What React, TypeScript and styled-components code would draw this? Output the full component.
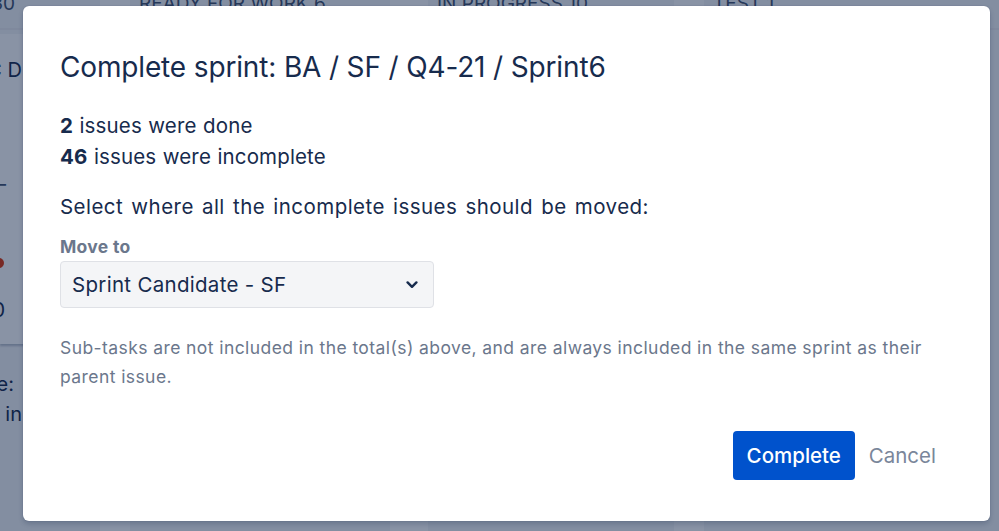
import React, { useState } from "react";
import styled, { createGlobalStyle } from "styled-components";

const GlobalStyle = createGlobalStyle`
  html, body {
    margin: 0;
    padding: 0;
    width: 100%;
    height: 100%;
    overflow: hidden;
    font-family: Inter, "Noto Sans", "Liberation Sans", sans-serif;
    background: #ffffff;
  }
  #root {
    height: 100%;
  }
`;

const columns = [
  { title: "BACKLOG 30", width: 100, gap: 0 },
  { title: "READY FOR WORK 6", width: 260, gap: 30 },
  { title: "IN PROGRESS 10", width: 246, gap: 38 },
  { title: "TEST 1", width: 300, gap: 30 },
];

function CompleteSprintDialog() {
  const [target, setTarget] = useState<string>("Sprint Candidate - SF");

  return (
    <Page>
      <Board>
        {columns.map((column, index) => (
          <Column key={column.title} $width={column.width} $gap={column.gap}>
            <ColumnHeader $first={index === 0}>{column.title}</ColumnHeader>
            {index === 0 && (
              <>
                <Card>
                  <CardKey>BASFC D</CardKey>
                  <CardDash>–</CardDash>
                  <CardDot />
                  <CardCount>0</CardCount>
                </Card>
                <CardNote>Due date:</CardNote>
                <CardNote $second>Due in</CardNote>
              </>
            )}
          </Column>
        ))}
      </Board>

      <Blanket>
        <Dialog>
          <Title>Complete sprint: BA / SF / Q4-21 / Sprint6</Title>

          <Summary>
            <SummaryLine>
              <strong>2</strong> issues were done
            </SummaryLine>
            <SummaryLine>
              <strong>46</strong> issues were incomplete
            </SummaryLine>
          </Summary>

          <Prompt>Select where all the incomplete issues should be moved:</Prompt>

          <FieldLabel>Move to</FieldLabel>
          <SelectBox>
            <SelectValue>{target}</SelectValue>
            <Chevron width="12" height="8" viewBox="0 0 12 8">
              <path
                d="M1.6 1.4 L6 5.8 L10.4 1.4"
                fill="none"
                stroke="#172b4d"
                strokeWidth="2.4"
                strokeLinecap="round"
                strokeLinejoin="round"
              />
            </Chevron>
          </SelectBox>

          <Note>
            Sub-tasks are not included in the total(s) above, and are always
            included in the same sprint as their parent issue.
          </Note>

          <Footer>
            <PrimaryButton onClick={() => setTarget("Sprint Candidate - SF")}>
              Complete
            </PrimaryButton>
            <SubtleButton>Cancel</SubtleButton>
          </Footer>
        </Dialog>
      </Blanket>
    </Page>
  );
}

const Page = styled.div`
  position: relative;
  width: 999px;
  height: 531px;
  overflow: hidden;
  background: #ffffff;
`;

const Board = styled.div`
  display: flex;
  height: 100%;
`;

const Column = styled.div<{ $width: number; $gap: number }>`
  flex: 0 0 ${(p) => p.$width}px;
  min-width: 0;
  margin-left: ${(p) => p.$gap}px;
  display: flex;
  flex-direction: column;
  background: #f4f5f7;
  overflow: hidden;
`;

const ColumnHeader = styled.div<{ $first: boolean }>`
  height: 36px;
  box-sizing: border-box;
  margin-top: -6px;
  padding: ${(p) => (p.$first ? "0 85px 0 0" : "0 0 0 9px")};
  font-size: 19px;
  line-height: 20px;
  color: #42526e;
  display: flex;
  justify-content: ${(p) => (p.$first ? "flex-end" : "flex-start")};
  text-transform: uppercase;
  white-space: nowrap;
  border-bottom: 2px solid #ebecf0;
`;

const Card = styled.div`
  margin-top: 4px;
  height: 310px;
  box-sizing: border-box;
  padding-right: 78px;
  background: #ffffff;
  display: flex;
  flex-direction: column;
  align-items: flex-end;
  font-size: 20px;
  color: #172b4d;
  box-shadow: 0 2px 2px rgba(9, 30, 66, 0.25);
`;

const CardKey = styled.div`
  margin-top: 24px;
  white-space: nowrap;
`;

const CardDash = styled.div`
  margin-top: 90px;
  margin-right: 16px;
  color: #42526e;
`;

const CardDot = styled.div`
  width: 10px;
  height: 10px;
  border-radius: 50%;
  background: #de350b;
  margin-top: 62px;
  margin-right: 18px;
`;

const CardCount = styled.div`
  margin-top: 30px;
  margin-right: 17px;
`;

const CardNote = styled.div<{ $second?: boolean }>`
  margin-top: ${(p) => (p.$second ? "6px" : "28px")};
  padding-right: ${(p) => (p.$second ? "78px" : "86px")};
  display: flex;
  justify-content: flex-end;
  font-size: 20px;
  color: #172b4d;
  white-space: nowrap;
`;

const Blanket = styled.div`
  position: absolute;
  inset: 0;
  background: rgba(9, 30, 66, 0.48);
`;

const Dialog = styled.div`
  position: absolute;
  top: 6px;
  left: 23px;
  width: 967px;
  height: 515px;
  box-sizing: border-box;
  padding: 44px 40px 0 37px;
  background: #ffffff;
  border-radius: 6px;
  box-shadow: 0 0 1px rgba(9, 30, 66, 0.31), 0 3px 5px rgba(9, 30, 66, 0.2);
  display: flex;
  flex-direction: column;
  color: #172b4d;
`;

const Title = styled.h1`
  margin: 0;
  font-size: 28px;
  line-height: 34px;
  font-weight: 400;
  letter-spacing: -0.15px;
  color: #172b4d;
`;

const Summary = styled.div`
  margin-top: 26px;
  display: flex;
  flex-direction: column;
`;

const SummaryLine = styled.div`
  font-size: 20.5px;
  line-height: 31px;
  letter-spacing: 0.15px;
  word-spacing: 0.5px;

  strong {
    font-weight: 700;
  }
`;

const Prompt = styled.p`
  margin: 19px 0 0 0;
  font-size: 20.5px;
  line-height: 31px;
  letter-spacing: 0.45px;
  word-spacing: 2px;
`;

const FieldLabel = styled.label`
  margin-top: 13px;
  font-size: 17.5px;
  line-height: 24px;
  font-weight: 700;
  color: #6b778c;
  letter-spacing: 0.3px;
`;

const SelectBox = styled.div`
  margin-top: 2px;
  width: 374px;
  height: 47px;
  box-sizing: border-box;
  display: flex;
  align-items: center;
  justify-content: space-between;
  padding: 0 15px 0 11px;
  background: #f4f5f7;
  border: 1.5px solid #dfe1e6;
  border-radius: 4px;
`;

const SelectValue = styled.span`
  font-size: 20.5px;
  letter-spacing: 0.3px;
  color: #172b4d;
`;

const Chevron = styled.svg`
  display: block;
`;

const Note = styled.p`
  margin: 25px 0 0 0;
  font-size: 17.5px;
  line-height: 29px;
  letter-spacing: 0.42px;
  color: #6b778c;
  max-width: 880px;
`;

const Footer = styled.div`
  margin-top: 40px;
  display: flex;
  justify-content: flex-end;
  align-items: center;
`;

const PrimaryButton = styled.button`
  height: 49px;
  width: 122px;
  border: none;
  border-radius: 4px;
  background: #0052cc;
  color: #ffffff;
  font-family: inherit;
  font-size: 20.5px;
  font-weight: 500;
  cursor: pointer;
`;

const SubtleButton = styled.button`
  height: 49px;
  padding: 0 14px;
  border: none;
  background: transparent;
  color: #7a869a;
  font-family: inherit;
  font-size: 20.5px;
  cursor: pointer;
`;

export default function App() {
  return (
    <>
      <GlobalStyle />
      <CompleteSprintDialog />
    </>
  );
}
